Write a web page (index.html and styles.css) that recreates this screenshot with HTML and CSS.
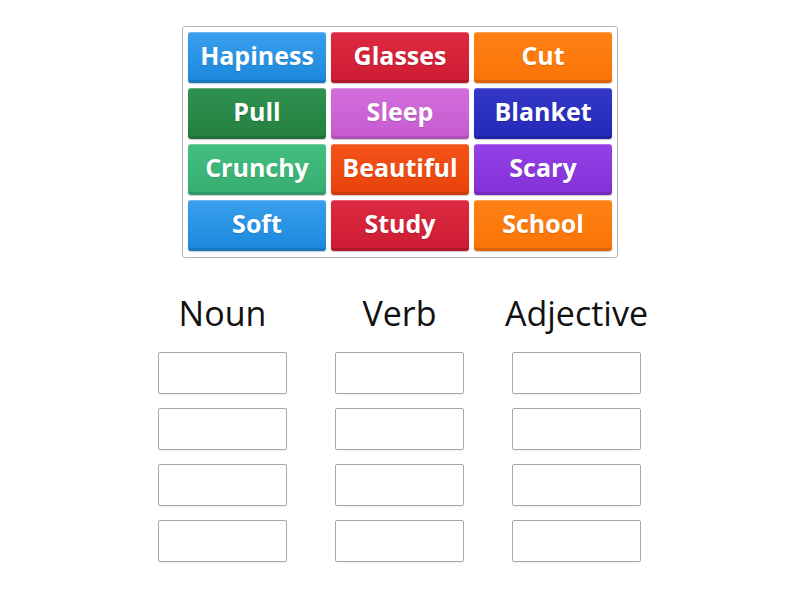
FILE: index.html
```html
<!DOCTYPE html>
<html>
<head>
<meta charset="utf-8">
<link rel="stylesheet" href="styles.css">
</head>
<body>
<div class="bank">
  <div class="tile c-blue">Hapiness</div>
  <div class="tile c-red">Glasses</div>
  <div class="tile c-orange">Cut</div>
  <div class="tile c-green">Pull</div>
  <div class="tile c-orchid">Sleep</div>
  <div class="tile c-navy">Blanket</div>
  <div class="tile c-mint">Crunchy</div>
  <div class="tile c-flame">Beautiful</div>
  <div class="tile c-purple">Scary</div>
  <div class="tile c-blue">Soft</div>
  <div class="tile c-red">Study</div>
  <div class="tile c-orange">School</div>
</div>
<div class="groups">
  <div class="group">
    <div class="title">Noun</div>
    <div class="slot"></div><div class="slot"></div><div class="slot"></div><div class="slot"></div>
  </div>
  <div class="group">
    <div class="title">Verb</div>
    <div class="slot"></div><div class="slot"></div><div class="slot"></div><div class="slot"></div>
  </div>
  <div class="group">
    <div class="title">Adjective</div>
    <div class="slot"></div><div class="slot"></div><div class="slot"></div><div class="slot"></div>
  </div>
</div>
</body>
</html>
```
FILE: styles.css
```css
html, body {
  margin: 0;
  padding: 0;
  background: #ffffff;
  font-family: "Open Sans", "Liberation Sans", sans-serif;
}
.bank {
  width: 424px;
  margin: 26px auto 0;
  padding: 5px 5px 6px;
  border: 1px solid #b4b4b4;
  border-radius: 3px;
  display: grid;
  grid-template-columns: repeat(3, 138px);
  grid-auto-rows: 51px;
  gap: 5px;
}
.tile {
  border-radius: 3px;
  color: #ffffff;
  font-weight: 700;
  font-size: 25px;
  display: flex;
  align-items: center;
  justify-content: center;
  padding-bottom: 5px;
  box-sizing: border-box;
  text-shadow: 0 1px 1px rgba(0,0,0,0.15);
  box-shadow: inset 0 1px 0 rgba(255,255,255,0.25), inset 0 -3px 0 rgba(0,0,0,0.12), 0 1px 1px rgba(0,0,0,0.2);
}
.c-blue   { background: linear-gradient(#3a9fec, #1a88dc); }
.c-red    { background: linear-gradient(#dc2b40, #cc1b32); }
.c-orange { background: linear-gradient(#ff8215, #fb7306); }
.c-green  { background: linear-gradient(#2f9150, #24803f); }
.c-orchid { background: linear-gradient(#d26ddb, #c65bd0); }
.c-navy   { background: linear-gradient(#3438c9, #2328b8); }
.c-mint   { background: linear-gradient(#44be80, #36ad71); }
.c-flame  { background: linear-gradient(#f5541a, #e8420a); }
.c-purple { background: linear-gradient(#9440e6, #8430d8); }
.groups {
  display: flex;
  justify-content: center;
  gap: 48px;
  margin-top: 35px;
  padding-right: 1px;
}
.group {
  width: 129px;
  display: flex;
  flex-direction: column;
  align-items: stretch;
}
.title {
  font-size: 34px;
  line-height: 40px;
  color: #111111;
  text-align: center;
  white-space: nowrap;
  margin: 0 -30px 19px;
}
.slot {
  height: 42px;
  box-sizing: border-box;
  border: 1px solid #a8a8a8;
  border-radius: 2px;
  margin-bottom: 14px;
  box-shadow: 0 1px 1px rgba(0,0,0,0.06);
}
```
